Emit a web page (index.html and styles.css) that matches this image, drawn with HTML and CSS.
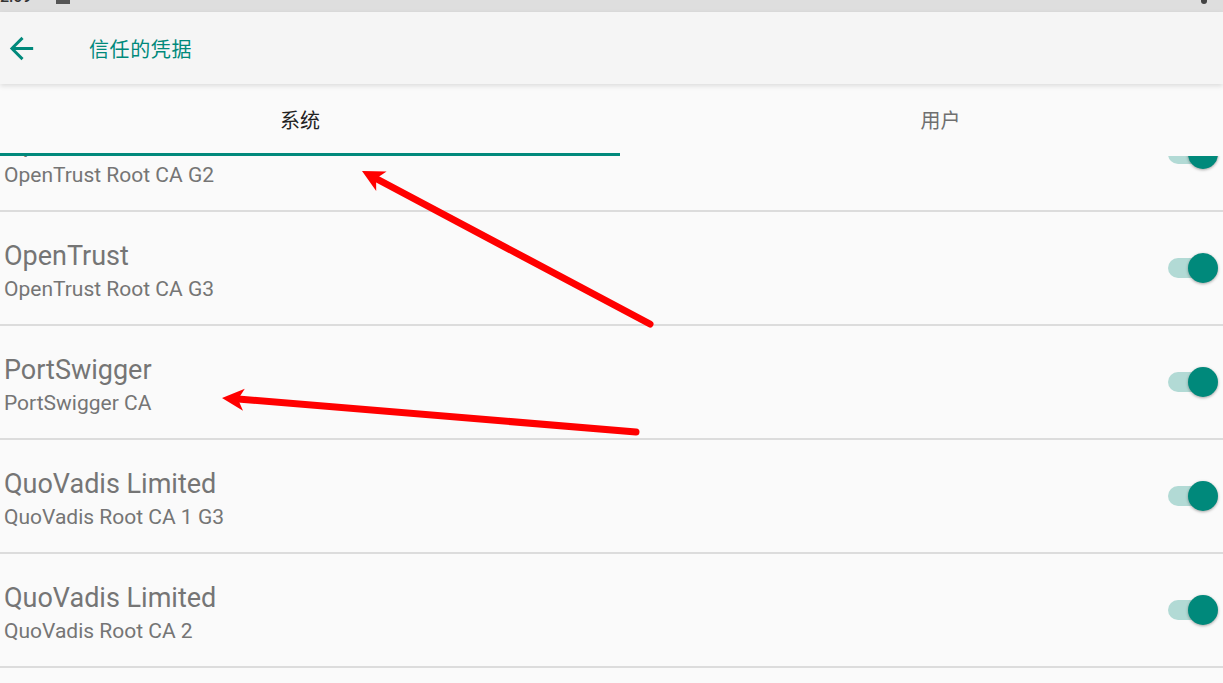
FILE: index.html
```html
<!DOCTYPE html>
<html lang="zh">
<head>
<meta charset="utf-8">
<title>信任的凭据</title>
<link rel="stylesheet" href="styles.css">
</head>
<body>
<div class="screen">
  <div class="statusbar">
    <span class="time">2:09</span>
    <span class="sb-icon"></span>
    <span class="sb-right"></span>
  </div>
  <header class="toolbar">
    <svg class="back" viewBox="0 0 24 24" width="35" height="35"><path d="M20 11H7.83l5.59-5.59L12 4l-8 8 8 8 1.41-1.41L7.83 13H20v-2z" fill="#00897b"/></svg>
    <h1 class="title">信任的凭据</h1>
  </header>
  <nav class="tabs">
    <div class="tab tab-active">系统</div>
    <div class="tab tab-user">用户</div>
  </nav>
  <main class="list">
    <div class="item first">
      <div class="texts"><div class="name">OpenTrust</div><div class="sub">OpenTrust Root CA G2</div></div>
      <div class="switch"><span class="track"></span><span class="thumb"></span></div>
    </div>
    <div class="item">
      <div class="texts"><div class="name">OpenTrust</div><div class="sub">OpenTrust Root CA G3</div></div>
      <div class="switch"><span class="track"></span><span class="thumb"></span></div>
    </div>
    <div class="item">
      <div class="texts"><div class="name">PortSwigger</div><div class="sub">PortSwigger CA</div></div>
      <div class="switch"><span class="track"></span><span class="thumb"></span></div>
    </div>
    <div class="item">
      <div class="texts"><div class="name">QuoVadis Limited</div><div class="sub">QuoVadis Root CA 1 G3</div></div>
      <div class="switch"><span class="track"></span><span class="thumb"></span></div>
    </div>
    <div class="item">
      <div class="texts"><div class="name">QuoVadis Limited</div><div class="sub">QuoVadis Root CA 2</div></div>
      <div class="switch"><span class="track"></span><span class="thumb"></span></div>
    </div>
    <div class="item">
      <div class="texts"><div class="name">QuoVadis Limited</div><div class="sub">QuoVadis Root CA 2 G3</div></div>
      <div class="switch"><span class="track"></span><span class="thumb"></span></div>
    </div>
  </main>
  <svg class="annotations" width="1223" height="683" viewBox="0 0 1223 683">
    <line x1="650" y1="324" x2="375" y2="178" stroke="#ff0000" stroke-width="7" stroke-linecap="round"/>
    <polygon points="362,171 386.6,171.6 376.1,178.5 376.2,191" fill="#ff0000"/>
    <line x1="636" y1="432" x2="238" y2="399" stroke="#ff0000" stroke-width="7" stroke-linecap="round"/>
    <polygon points="222,398 244.8,388.8 238,399.3 243,410.8" fill="#ff0000"/>
  </svg>
</div>
</body>
</html>
```
FILE: styles.css
```css
* { box-sizing: border-box; }
html, body { margin: 0; padding: 0; }
body {
  background: #fafafa;
  font-family: Roboto, "Noto Sans CJK SC", sans-serif;
  width: 1223px;
  height: 683px;
  overflow: hidden;
}
.screen {
  position: relative;
  width: 1223px;
  height: 683px;
  overflow: hidden;
  display: flex;
  flex-direction: column;
}
.statusbar {
  height: 12px;
  background: #dedede;
  overflow: hidden;
  display: flex;
  align-items: flex-end;
  position: relative;
}
.time {
  font-size: 16px;
  line-height: 16px;
  color: #333;
  margin-bottom: 7px;
  font-weight: 500;
}
.sb-icon {
  width: 14px;
  height: 4px;
  background: #555;
  margin-left: 24px;
  margin-bottom: 8px;
  align-self: flex-start;
}
.sb-right {
  width: 6px;
  height: 4px;
  background: #444;
  margin-left: auto;
  margin-right: 16px;
  align-self: flex-start;
  border-radius: 0 0 3px 3px;
}
.toolbar {
  height: 72px;
  background: #f5f5f5;
  display: flex;
  align-items: center;
  position: relative;
  z-index: 3;
  box-shadow: 0 2px 5px rgba(0,0,0,0.12);
}
.back {
  margin-left: 4px;
  flex: none;
}
.title {
  margin: 0 0 0 50px;
  font-size: 20px;
  font-weight: 400;
  color: #00897b;
  letter-spacing: 0.6px;
}
.tabs {
  height: 72px;
  background: #fafafa;
  display: grid;
  grid-template-columns: 620px 1fr;
  position: relative;
  z-index: 2;
}
.tab {
  display: flex;
  align-items: center;
  justify-content: center;
  font-size: 20px;
  color: #6f6f6f;
}
.tab-active {
  color: #222;
  padding-right: 20px;
  border-bottom: 3px solid #00897b;
  padding-top: 2px;
}
.tab-user {
  padding-left: 38px;
  padding-bottom: 1px;
}
.list {
  flex: 1;
  overflow: hidden;
  position: relative;
  z-index: 1;
}
.item {
  height: 114px;
  border-bottom: 2px solid #dcdcdc;
  display: flex;
  align-items: center;
  padding: 0 4px;
}
.item.first {
  margin-top: -58px;
}
.texts {
  flex: 1;
  display: flex;
  flex-direction: column;
  padding-top: 6px;
}
.name {
  font-size: 27px;
  line-height: 32px;
  color: #757575;
}
.sub {
  font-size: 21px;
  line-height: 26px;
  color: #757575;
  margin-top: 4px;
}
.switch {
  position: relative;
  width: 50px;
  height: 30px;
  margin-right: 1px;
  flex: none;
}
.track {
  position: absolute;
  left: 0;
  top: 5px;
  width: 42px;
  height: 20px;
  border-radius: 10px;
  background: #b2dad5;
}
.thumb {
  position: absolute;
  right: 0;
  top: 0;
  width: 30px;
  height: 30px;
  border-radius: 50%;
  background: #00897b;
  box-shadow: 0 1px 3px rgba(0,0,0,0.35);
}
.annotations {
  position: absolute;
  left: 0;
  top: 0;
  z-index: 10;
  pointer-events: none;
}
```
